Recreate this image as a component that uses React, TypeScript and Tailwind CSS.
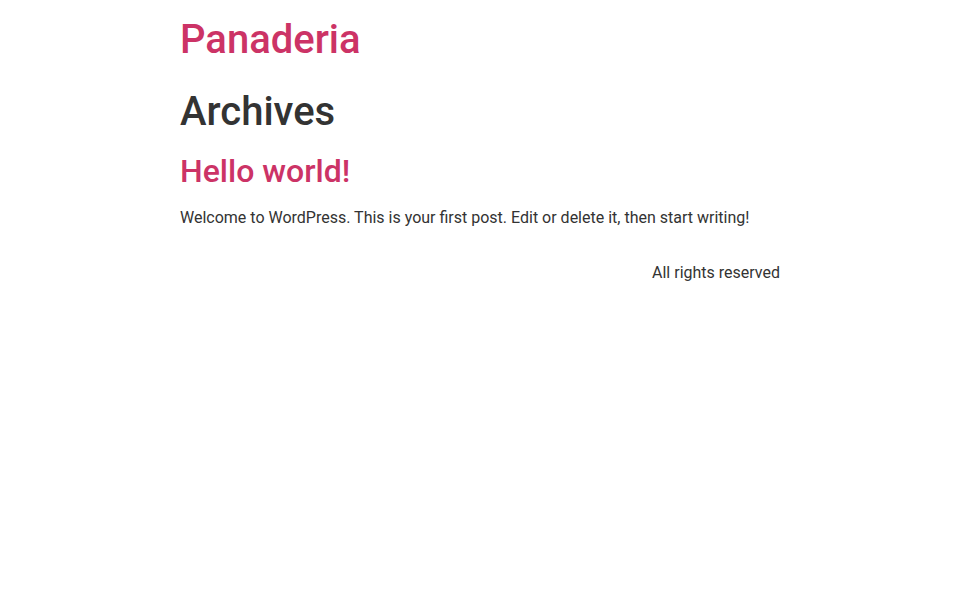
export default function App() {
  return (
    <div className="min-h-[600px] bg-white text-[#333] font-['Roboto',sans-serif] text-base leading-normal">
      <div className="mx-auto w-[600px]">
        <header className="py-4">
          <p className="text-[40px] leading-[1.2] font-medium text-[#c36]">Panaderia</p>
        </header>
        <main>
          <h1 className="mt-2 mb-4 text-[40px] leading-[1.2] font-medium">Archives</h1>
          <article>
            <h2 className="mt-2 mb-4 text-[32px] leading-[1.2] font-medium text-[#c36]">Hello world!</h2>
            <p className="mb-[14.4px]">Welcome to WordPress. This is your first post. Edit or delete it, then start writing!</p>
          </article>
        </main>
        <footer className="py-4 text-right">
          <p>All rights reserved</p>
        </footer>
      </div>
    </div>
  );
}
